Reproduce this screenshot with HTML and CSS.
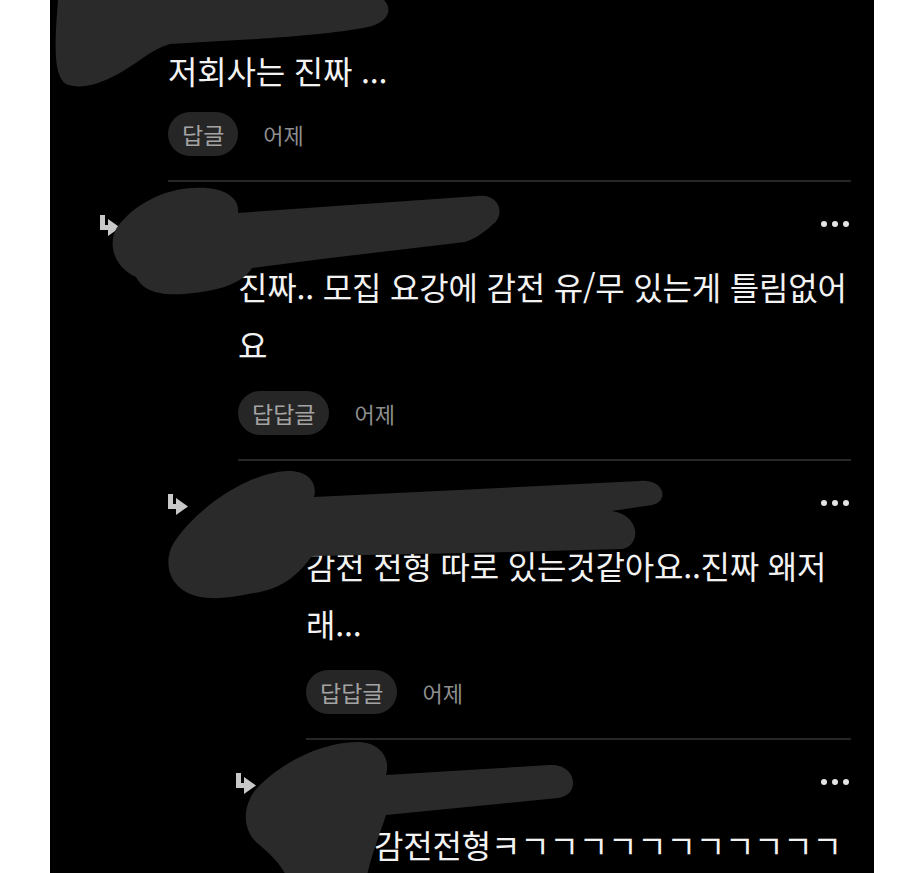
FILE: index.html
```html
<!DOCTYPE html>
<html lang="ko">
<head>
    <meta charset="UTF-8">
    <meta name="viewport" content="width=device-width, initial-scale=1.0">
    <title>댓글</title>
    <link rel="stylesheet" href="styles.css">
</head>
<body>
    <div class="panel">
        <div class="comment top">
            <div class="main">
                <p class="text">저회사는 진짜 ...</p>
                <div class="meta">
                    <span class="chip">답글</span>
                    <span class="time">어제</span>
                </div>
            </div>
            <svg class="scribble" viewBox="50 0 824 120" width="824" height="120">
                <path d="M58 0 L384 0 C392 8 390 20 372 26 C330 36 240 40 170 44 C150 50 140 62 118 74 C100 84 80 90 66 84 C54 76 54 50 58 0 Z"/>
            </svg>
        </div>

        <div class="comment reply lv1">
            <div class="gutter">
                <svg class="reply-icon" viewBox="0 0 22 22"><path d="M2.5 0 V12.5 H10" /><polygon points="8,4 20,12.5 8,21" /></svg>
            </div>
            <div class="main">
                <div class="head">
                    <svg class="more" viewBox="0 0 28 6"><circle cx="3" cy="3" r="3"/><circle cx="14" cy="3" r="3"/><circle cx="25" cy="3" r="3"/></svg>
                </div>
                <p class="text">진짜.. 모집 요강에 감전 유/무 있는게 틀림없어요</p>
                <div class="meta">
                    <span class="chip">답답글</span>
                    <span class="time">어제</span>
                </div>
            </div>
            <svg class="scribble" viewBox="50 181 824 130" width="824" height="130">
                <path d="M193 187 C226 185 240 198 238 212 L478 195 C500 193 506 214 492 224 C484 232 474 238 465 241 L330 257 L252 267 C244 280 224 290 184 293 C156 295 142 288 136 276 C114 266 108 244 116 228 C132 204 164 188 193 187 Z"/>
            </svg>
        </div>

        <div class="comment reply lv2">
            <div class="gutter">
                <svg class="reply-icon" viewBox="0 0 22 22"><path d="M2.5 0 V12.5 H10" /><polygon points="8,4 20,12.5 8,21" /></svg>
            </div>
            <div class="main">
                <div class="head">
                    <svg class="more" viewBox="0 0 28 6"><circle cx="3" cy="3" r="3"/><circle cx="14" cy="3" r="3"/><circle cx="25" cy="3" r="3"/></svg>
                </div>
                <p class="text">감전 전형 따로 있는것같아요..진짜 왜저래...</p>
                <div class="meta">
                    <span class="chip">답답글</span>
                    <span class="time">어제</span>
                </div>
            </div>
            <svg class="scribble" viewBox="50 460 824 150" width="824" height="150">
                <path d="M287 470 C308 469 318 482 314 496 L640 480 C664 478 670 500 652 504 L612 510 C640 514 642 544 622 548 L470 552 L312 555 C298 574 282 588 254 592 C226 598 202 600 186 591 C166 580 164 556 175 540 C198 506 248 472 287 470 Z"/>
            </svg>
        </div>

        <div class="comment reply lv3">
            <div class="gutter">
                <svg class="reply-icon" viewBox="0 0 22 22"><path d="M2.5 0 V12.5 H10" /><polygon points="8,4 20,12.5 8,21" /></svg>
            </div>
            <div class="main">
                <div class="head">
                    <svg class="more" viewBox="0 0 28 6"><circle cx="3" cy="3" r="3"/><circle cx="14" cy="3" r="3"/><circle cx="25" cy="3" r="3"/></svg>
                </div>
                <p class="text">감전전형ㅋㄱㄱㄱㄱㄱㄱㄱㄱㄱㄱㄱ</p>
            </div>
            <svg class="scribble" viewBox="50 740 824 140" width="824" height="140">
                <path d="M357 742 C380 742 391 758 386 775 L550 765 C576 763 582 795 558 798 L386 815 C380 834 372 852 366 880 L288 880 C282 864 268 852 256 842 C240 826 244 800 260 785 C285 760 325 742 357 742 Z"/>
            </svg>
        </div>
    </div>
</body>
</html>
```

FILE: styles.css
```css
body {
    margin: 0;
    background-color: #fff;
    font-family: "Noto Sans CJK KR", "Noto Sans", sans-serif;
}
.panel {
    margin-left: 50px;
    width: 824px;
    height: 873px;
    background: #000;
    overflow: hidden;
}
.comment {
    position: relative;
    display: flex;
    padding-right: 23px;
}
.top {
    padding-left: 118px;
}
.lv1 {
    padding-left: 50px;
}
.lv2 {
    padding-left: 118px;
}
.lv3 {
    padding-left: 186px;
}
.gutter {
    width: 138px;
    flex: none;
    padding-top: 33px;
}
.reply-icon {
    display: block;
    width: 22px;
    height: 22px;
}
.reply-icon path {
    fill: none;
    stroke: #c8c8c8;
    stroke-width: 5;
}
.reply-icon polygon {
    fill: #c8c8c8;
}
.main {
    flex: 1;
    min-width: 0;
    border-bottom: 2px solid #262626;
    padding-bottom: 24px;
}
.top .main {
    padding-top: 41px;
}
.head {
    height: 24px;
    margin-top: 30px;
    margin-bottom: 21px;
    display: flex;
    justify-content: flex-end;
    align-items: center;
}
.more {
    width: 28px;
    height: 6px;
    margin-right: 2px;
    fill: #e4e4e4;
}
.text {
    margin: 0;
    font-size: 32px;
    line-height: 58px;
    letter-spacing: -0.2px;
    color: #f2f2f2;
}
.meta {
    display: flex;
    align-items: center;
    gap: 25px;
    margin-top: 18px;
}
.top .meta {
    margin-top: 13px;
}
.chip {
    height: 44px;
    line-height: 44px;
    padding: 0 14px;
    border-radius: 22px;
    background: #262626;
    color: #a3a3a3;
    font-size: 23px;
}
.time {
    font-size: 22px;
    color: #8e8e8e;
}
.scribble {
    position: absolute;
    left: 0;
    top: 0;
    overflow: visible;
    fill: #2a2a2a;
}
```
